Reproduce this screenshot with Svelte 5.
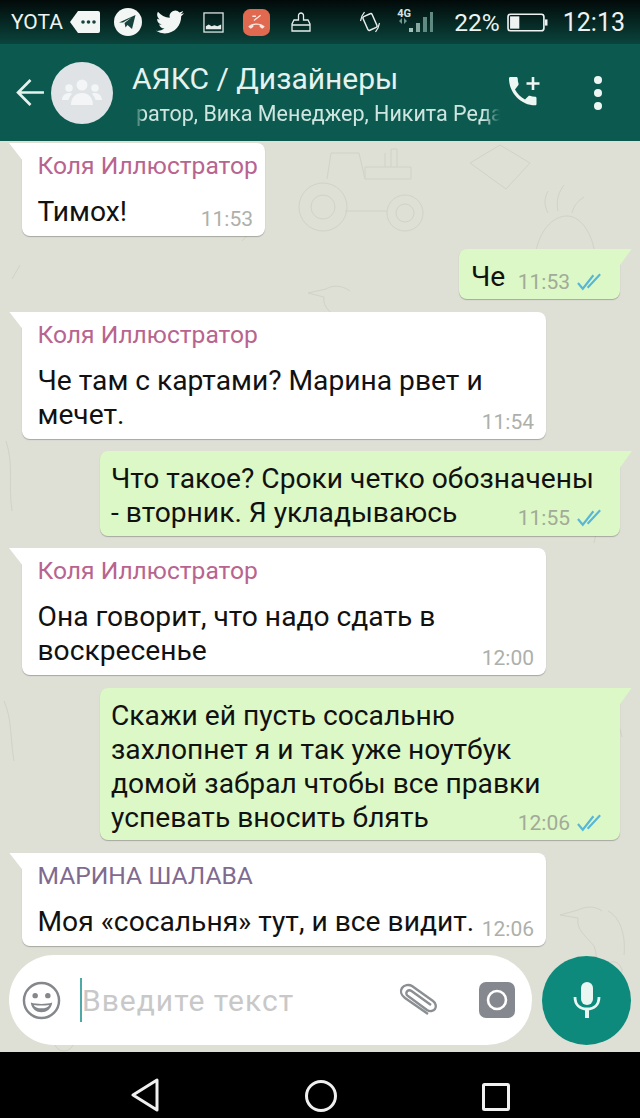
<script>
  const messages = [
    { from: 'in', name: 'Коля Иллюстратор', lines: ['Тимох!'], time: '11:53' },
    { from: 'out', lines: ['Че'], time: '11:53' },
    { from: 'in', name: 'Коля Иллюстратор', lines: ['Че там с картами? Марина рвет и', 'мечет.'], time: '11:54' },
    { from: 'out', lines: ['Что такое? Сроки четко обозначены', '- вторник. Я укладываюсь'], time: '11:55' },
    { from: 'in', name: 'Коля Иллюстратор', lines: ['Она говорит, что надо сдать в', 'воскресенье'], time: '12:00' },
    { from: 'out', lines: ['Скажи ей пусть сосальню', 'захлопнет я и так уже ноутбук', 'домой забрал чтобы все правки', 'успевать вносить блять'], time: '12:06' },
    { from: 'in', name: 'МАРИНА ШАЛАВА', accent: true, lines: ['Моя «сосальня» тут, и все видит.'], time: '12:06' }
  ];
</script>

<div class="phone">
  <div class="status">
    <div class="status-left">
      <span class="carrier">YOTA</span>
      <svg class="ic-tag" viewBox="0 0 30 24"><path d="M8 1h20a2 2 0 0 1 2 2v18a2 2 0 0 1-2 2H8L0 12z" fill="#f2f6f4"/><circle cx="13" cy="12" r="1.800" fill="#16433c"/><circle cx="18.500" cy="12" r="1.800" fill="#16433c"/><circle cx="24" cy="12" r="1.800" fill="#16433c"/></svg>
      <svg class="ic-tg" viewBox="0 0 28 28"><circle cx="14" cy="14" r="14" fill="#f2f6f4"/><path d="M5 14.500 21.500 7 18 21l-4.500-4-2 2.500-1-4.500 7-5.500-8.500 5z" fill="#16433c"/></svg>
      <svg class="ic-tw" viewBox="0 0 24 24"><path fill="#f2f6f4" d="M23.953 4.57a10 10 0 01-2.825.775 4.958 4.958 0 002.163-2.723c-.951.555-2.005.959-3.127 1.184a4.92 4.92 0 00-8.384 4.482C7.69 8.095 4.067 6.13 1.64 3.162a4.822 4.822 0 00-.666 2.475c0 1.71.87 3.213 2.188 4.096a4.904 4.904 0 01-2.228-.616v.06a4.923 4.923 0 003.946 4.827 4.996 4.996 0 01-2.212.085 4.936 4.936 0 004.604 3.417 9.867 9.867 0 01-6.102 2.105c-.39 0-.779-.023-1.17-.067a13.995 13.995 0 007.557 2.209c9.053 0 13.998-7.496 13.998-13.985 0-.21 0-.42-.015-.63A9.935 9.935 0 0024 4.59z"/></svg>
      <svg class="ic-img" viewBox="0 0 22 22"><rect x="1" y="1" width="20" height="20" fill="none" stroke="#e6eeeb" stroke-width="1.300"/><path d="M3 18v-3l3-2 3 2 3-1 3 1 4-2v5z" fill="#e6eeeb"/></svg>
      <svg class="ic-call" viewBox="0 0 26 26"><rect width="26" height="26" rx="7" fill="#e0694f"/><path d="M5 17c4-4 12-4 16 0l-2.500 2-2.500-2v-1.500c-2-.6-4-.6-6 0V17l-2.500 2z" fill="#fbe7e0"/><path d="M9 7h3.500M10.500 11l6.500-5" stroke="#fbe7e0" stroke-width="1.300" fill="none"/></svg>
      <svg class="ic-brush" viewBox="0 0 20 20"><path d="M10 1a2.500 2.500 0 0 1 2.500 2.500V8H17l2 4v7H1v-7l2-4h4.500V3.500A2.500 2.500 0 0 1 10 1zM1.500 13h17" fill="none" stroke="#e6eeeb" stroke-width="1.300"/></svg>
    </div>
    <div class="status-right">
      <svg class="ic-vib" viewBox="0 0 22 22"><rect x="6" y="3.500" width="10" height="15" rx="1.500" transform="rotate(-24 11 11)" fill="none" stroke="#e6eeeb" stroke-width="1.500"/><path d="M1.500 10 3 5 5.500 1M20.500 12 19 17l-2.500 4" fill="none" stroke="#e6eeeb" stroke-width="1.200"/></svg>
      <div class="signal">
        <span class="net">4G</span>
        <svg viewBox="0 0 38 24"><rect x="12" y="18" width="4" height="4" fill="#a3c0ba"/><rect x="19" y="13" width="4" height="9" fill="#86a89f"/><rect x="26" y="7" width="4" height="15" fill="#5f8a81"/><rect x="33" y="2" width="3" height="20" fill="#5f8a81"/><path d="M2 11l3-3v6zM10 11l-3 3V8z" fill="#6f9990"/></svg>
      </div>
      <span class="pct">22%</span>
      <svg class="ic-batt" viewBox="0 0 40 18"><rect x="1" y="1" width="35" height="16" rx="2.500" fill="none" stroke="#eef3f1" stroke-width="1.600"/><rect x="3" y="3" width="9" height="12" fill="#eef3f1"/><rect x="37" y="6" width="2.500" height="6" fill="#eef3f1"/></svg>
      <span class="clock">12:13</span>
    </div>
  </div>

  <header class="appbar">
    <svg class="back" viewBox="0 0 28 28"><path d="M27 14H2M14 2 2 14l12 12" fill="none" stroke="#e6f2ee" stroke-width="2.600"/></svg>
    <div class="avatar">
      <svg viewBox="0 0 40 28"><circle cx="20" cy="6" r="5.500" fill="#f3f5f6"/><circle cx="7" cy="9" r="3.800" fill="#f3f5f6"/><circle cx="33" cy="9" r="3.800" fill="#f3f5f6"/><path d="M9 26c0-8 5-12 11-12s11 4 11 12zM0 21c0-4 3-7 7-7 1.500 0 2.500.3 3 1-2 2-3 4-3.500 6zM40 21c0-4-3-7-7-7-1.500 0-2.500.3-3 1 2 2 3 4 3.500 6z" fill="#f3f5f6"/></svg>
    </div>
    <div class="titles">
      <div class="title">АЯКС / Дизайнеры</div>
      <div class="members">ратор, Вика Менеджер, Никита Реда</div>
    </div>
    <svg class="call" viewBox="0 0 36 36"><path fill="#eef6f3" d="M9 14.500c2.200 4.300 5.700 7.800 10 10l3.300-3.300c.4-.4 1-.5 1.500-.4 1.700.6 3.500.9 5.400.9.800 0 1.300.6 1.300 1.300v6c0 .8-.5 1.300-1.300 1.300C15.400 30.300 3 18 3 3.400 3 2.600 3.600 2 4.400 2h6c.7 0 1.300.6 1.300 1.400 0 1.900.3 3.700.9 5.400.1.500 0 1.100-.4 1.500z"/><path d="M27 2v13M20.500 8.500h13" stroke="#eef6f3" stroke-width="2.600"/></svg>
    <div class="more"><i></i><i></i><i></i></div>
  </header>

  <main class="chat">
    <svg class="doodles" viewBox="0 0 640 911">
      <g fill="none" stroke="#d2d2c7" stroke-width="1">
        <!-- tractor -->
        <circle cx="323" cy="66" r="24"/>
        <circle cx="323" cy="66" r="12"/>
        <circle cx="405" cy="72" r="18"/>
        <circle cx="405" cy="72" r="9"/>
        <path d="M327 38l4-26h28l6 26M365 38h46v-12h-46zM345 70h42M385 26V12M391 26V8h6v18"/>
        <!-- leaf -->
        <path d="M470 22l30-18 30 18-24 26z"/>
        <!-- pineapple -->
        <path d="M535 115c4-26 18-40 32-40s26 18 28 40M548 72c-4-8-4-14 0-22M558 70c-2-10 0-18 6-26M572 72c2-8 6-12 12-16"/>
        <!-- seahorses -->
        <path d="M350 150c-8-6-18-6-24-2l-18 4 16 4c-2 12 10 16 16 26 6 12 10 22 2 34"/>
        <path d="M602 770c-8-6-18-4-24-1l-18 5 18 3c-2 12 8 18 16 28 6 14-2 26 8 36 10 6 20-2 20-12-4-14-20-8-16 2M608 770c12 6 18 24 16 44"/>
        <!-- background scraps -->
        <path d="M6 300c8 24 2 44 6 70M4 560c8 18 6 36 10 60M572 340c16 12 30 30 22 62M592 550c12 14 26 24 30 46M20 124l-8 14M240 60l18 22-16 18"/>
        <circle cx="64" cy="900" r="10"/>
      </g>
    </svg>

    <div class="messages">
      {#each messages as m}
        <div class="bubble {m.from}">
          {#if m.name}
            <div class="name" class:accent={m.accent}>{m.name}</div>
          {/if}
          <div class="body">
            <div class="text">
              {#each m.lines as line}
                <div>{line}</div>
              {/each}
            </div>
            <div class="meta">
              <span class="time">{m.time}</span>
              {#if m.from === 'out'}
                <svg class="ticks" viewBox="0 0 28 18"><path d="M1 10l5 6L17 2M11 15 24 1" fill="none" stroke="#58b6d6" stroke-width="2.200"/></svg>
              {/if}
            </div>
          </div>
        </div>
      {/each}
    </div>

    <div class="composer">
      <div class="input">
        <svg class="emoji" viewBox="0 0 40 40"><circle cx="20" cy="20" r="18" fill="none" stroke="#84878b" stroke-width="2.500"/><circle cx="13.500" cy="15" r="2.800" fill="#84878b"/><circle cx="26.500" cy="15" r="2.800" fill="#84878b"/><path d="M9 22c6 2 16 2 22 0-1 7-6 10-11 10S10 29 9 22z" fill="#84878b"/><path d="M12 24.500c5 1 11 1 16 0-1 2.500-4 3.500-8 3.500s-7-1-8-3.500z" fill="#fff"/></svg>
        <i class="caret"></i>
        <span class="placeholder">Введите текст</span>
        <svg class="clip" viewBox="0 0 40 34"><path d="M30 31 7 15C3 12 2 8 4 5s7-4 10-2l21 15c3 2 3.500 6 2 8s-5 3-8 1L10 13c-2-1-2-3-1-4.500s3-1.500 4.500-.5L33 22" fill="none" stroke="#8b8e92" stroke-width="2.400"/></svg>
        <svg class="camera" viewBox="0 0 36 36"><rect width="36" height="36" rx="7" fill="#85888e"/><circle cx="18" cy="18" r="9" fill="none" stroke="#fff" stroke-width="2.600"/></svg>
      </div>
      <div class="mic">
        <svg viewBox="0 0 28 36"><rect x="8" y="0" width="12" height="23" rx="6" fill="#e9f6f2"/><path d="M2 15c0 8 5 12 12 12s12-4 12-12" fill="none" stroke="#e9f6f2" stroke-width="2.800"/><path d="M14 27v9" stroke="#e9f6f2" stroke-width="4"/></svg>
      </div>
    </div>
  </main>

  <nav class="navbar">
    <div class="nav-cell"><svg class="nav-back" viewBox="0 0 28 34"><path d="M26 2v30L2 17z" fill="none" stroke="#f0f0f0" stroke-width="3" stroke-linejoin="round"/></svg></div>
    <div class="nav-cell"><svg class="nav-home" viewBox="0 0 32 32"><circle cx="16" cy="16" r="14.500" fill="none" stroke="#f0f0f0" stroke-width="3"/></svg></div>
    <div class="nav-cell"><svg class="nav-recent" viewBox="0 0 28 28"><rect x="1.500" y="1.500" width="25" height="25" rx="1" fill="none" stroke="#f0f0f0" stroke-width="3"/></svg></div>
  </nav>
</div>

<style>
  :global(body) {
    margin: 0;
    background: #000;
  }

  .phone {
    width: 640px;
    height: 1118px;
    display: flex;
    flex-direction: column;
    overflow: hidden;
    font-family: Roboto, "Noto Sans", sans-serif;
  }

  /* status bar */
  .status {
    height: 44px;
    flex: none;
    display: flex;
    justify-content: space-between;
    align-items: center;
    padding: 0 15px 0 11px;
    background: linear-gradient(#020a09, #0a443c);
    color: #eef3f1;
  }

  .status-left,
  .status-right {
    display: flex;
    align-items: center;
  }

  .carrier {
    font-size: 21px;
    width: 59px;
  }

  .ic-tag { width: 30px; height: 24px; }
  .ic-tg { width: 28px; height: 28px; margin-left: 14px; }
  .ic-tw { width: 28px; height: 28px; margin-left: 14px; }
  .ic-img { width: 21px; height: 21px; margin-left: 19px; }
  .ic-call { width: 27px; height: 27px; margin-left: 19px; }
  .ic-brush { width: 20px; height: 20px; margin-left: 21px; }
  .ic-vib { width: 22px; height: 22px; }

  .signal {
    position: relative;
    width: 38px;
    height: 24px;
    margin-left: 16px;
  }

  .signal svg {
    width: 38px;
    height: 24px;
    display: block;
  }

  .net {
    position: absolute;
    left: 0;
    top: -3px;
    font-size: 11px;
    font-weight: 700;
    color: #d8e4e1;
  }

  .pct {
    font-size: 24.500px;
    margin-left: 19px;
  }

  .ic-batt { width: 41px; height: 19px; margin-left: 7px; }

  .clock {
    font-size: 25px;
    margin-left: 15px;
  }

  /* app bar */
  .appbar {
    height: 97px;
    flex: none;
    display: flex;
    align-items: center;
    box-sizing: border-box;
    padding-left: 16px;
    background: #0c5a4f;
    color: #e6f2ee;
  }

  .back {
    width: 29px;
    height: 29px;
    flex: none;
  }

  .avatar {
    width: 62px;
    height: 62px;
    flex: none;
    margin-left: 6px;
    border-radius: 50%;
    background: #dfe3e5;
    display: flex;
    align-items: center;
    justify-content: center;
  }

  .avatar svg {
    width: 40px;
    height: 28px;
  }

  .titles {
    width: 368px;
    flex: none;
    margin-left: 19px;
    padding-top: 4px;
  }

  .title {
    font-size: 30px;
    line-height: 36px;
  }

  .members {
    width: 368px;
    margin-top: 2px;
    white-space: nowrap;
    font-size: 21.500px;
    line-height: 30px;
    text-indent: 4px;
    color: #cfe6e0;
    -webkit-mask-image: linear-gradient(90deg, transparent 3px, #000 12px, #000 352px, transparent 368px);
    mask-image: linear-gradient(90deg, transparent 3px, #000 12px, #000 352px, transparent 368px);
  }

  .call {
    width: 36px;
    height: 36px;
    flex: none;
    margin-left: 6px;
  }

  .more {
    display: flex;
    flex-direction: column;
    gap: 5px;
    margin-left: 52px;
  }

  .more i {
    width: 8px;
    height: 8px;
    border-radius: 50%;
    background: #eef6f3;
  }

  /* chat */
  .chat {
    flex: 1;
    min-height: 0;
    position: relative;
    display: flex;
    flex-direction: column;
    background: #dedfd5;
    overflow: hidden;
  }

  .doodles {
    position: absolute;
    inset: 0;
    width: 100%;
    height: 100%;
  }

  .messages {
    position: relative;
    flex: 1;
    min-height: 0;
    display: flex;
    flex-direction: column;
    gap: 12.500px;
    padding: 2px 20px 0 22px;
  }

  .bubble {
    position: relative;
    box-sizing: border-box;
    border-radius: 8px;
    box-shadow: 0 1px 1px rgba(0, 0, 0, 0.25);
    color: #111;
    font-size: 28.200px;
    line-height: 34px;
  }

  .bubble::before {
    content: "";
    position: absolute;
    top: 0;
    width: 14px;
    height: 18px;
  }

  .bubble.in {
    align-self: flex-start;
    width: 524px;
    background: #fff;
    border-top-left-radius: 0;
    padding: 8px 12px 7px 15.500px;
  }

  .bubble.in:first-child {
    width: 243px;
    padding-right: 12px;
  }

  .bubble.in::before {
    left: -13px;
    background: #fff;
    clip-path: polygon(0 0, 100% 0, 100% 100%);
  }

  .bubble.out {
    align-self: flex-end;
    background: #dcf8c6;
    border-top-right-radius: 0;
    padding: 11px 16px 5.500px 11px;
    width: 520px;
  }

  .bubble.out:nth-child(2) {
    width: 161px;
    padding-left: 12px;
  }

  .bubble.out::before {
    right: -12px;
    width: 13px;
    background: #dcf8c6;
    clip-path: polygon(0 0, 100% 0, 0 100%);
  }

  .name {
    font-size: 24.600px;
    line-height: 30px;
    margin-bottom: 14px;
    color: #b8648f;
    white-space: nowrap;
  }

  .name.accent {
    color: #7f6a90;
  }

  .body {
    display: flex;
    justify-content: space-between;
    align-items: flex-end;
  }

  .text {
    flex: 1;
    min-width: 0;
    white-space: nowrap;
  }

  .meta {
    flex: none;
    display: flex;
    align-items: center;
    gap: 7px;
    height: 24px;
    margin-bottom: -2px;
  }

  .out .meta {
    margin-bottom: 0;
  }

  .time {
    font-size: 21px;
    line-height: 24px;
    color: #adb0aa;
  }

  .out .time {
    color: #a2aa98;
  }

  .ticks {
    width: 27px;
    height: 18px;
  }

  /* composer */
  .composer {
    position: relative;
    flex: none;
    display: flex;
    align-items: center;
    gap: 10px;
    padding: 0 9px 7px;
  }

  .input {
    width: 523px;
    height: 90px;
    box-sizing: border-box;
    display: flex;
    align-items: center;
    padding-left: 13px;
    background: #fff;
    border-radius: 45px;
  }

  .emoji {
    width: 39px;
    height: 39px;
    flex: none;
  }

  .caret {
    width: 2px;
    height: 44px;
    margin-left: 19px;
    background: #4fa8a8;
    flex: none;
  }

  .placeholder {
    width: 316px;
    flex: none;
    font-size: 30px;
    letter-spacing: 1px;
    color: #c8c8c8;
  }

  .clip {
    width: 40px;
    height: 34px;
    flex: none;
  }

  .camera {
    width: 36px;
    height: 36px;
    flex: none;
    margin-left: 41px;
  }

  .mic {
    width: 89px;
    height: 89px;
    flex: none;
    border-radius: 50%;
    background: #0d8a7b;
    display: flex;
    align-items: center;
    justify-content: center;
  }

  .mic svg {
    width: 28px;
    height: 36px;
  }

  /* nav bar */
  .navbar {
    height: 66px;
    flex: none;
    display: flex;
    align-items: flex-end;
    box-sizing: border-box;
    padding: 0 56px 6px 57px;
    background: #000;
  }

  .nav-cell {
    flex: 1;
    display: flex;
    justify-content: center;
  }

  .nav-back { width: 28px; height: 34px; display: block; }
  .nav-home { width: 32px; height: 32px; display: block; }
  .nav-recent { width: 28px; height: 28px; display: block; margin-bottom: 1px; }
</style>
